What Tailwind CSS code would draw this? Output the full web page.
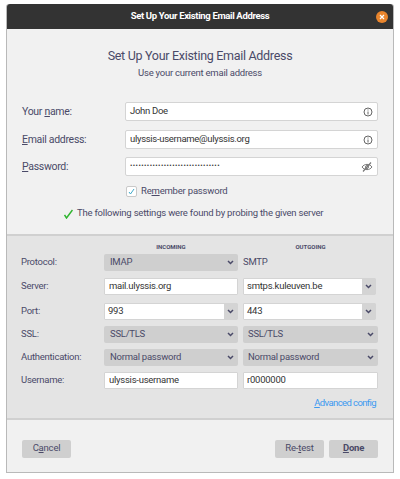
<!DOCTYPE html>
<html lang="en">
<head>
    <meta charset="UTF-8">
    <meta name="viewport" content="width=device-width, initial-scale=1.0">
    <title>Set Up Your Existing Email Address</title>
    <script src="https://cdn.jsdelivr.net/npm/@tailwindcss/browser@4"></script>
</head>

<body class="bg-white w-[400px] h-[479px] overflow-hidden pt-[4px] pl-[6px] font-['Roboto','Noto_Sans',sans-serif] text-[#4a4a68]">
    <div class="w-[388px] h-[469px] flex flex-col bg-[#f1f1f1] border border-[#b9b9b9] border-t-0 rounded-t-[3px]">

        <!-- Title bar -->
        <div class="h-[25px] shrink-0 relative flex items-center justify-center bg-[#333333] rounded-t-[3px] text-white text-[9.500px] font-bold tracking-[-0.35px]">
            Set Up Your Existing Email Address
            <span class="absolute right-[5px] top-[7px] w-[12px] h-[12px] rounded-full bg-[#e9852d] flex items-center justify-center">
                <svg width="6" height="6" viewBox="0 0 6 6"><path d="M1 1l4 4M5 1l-4 4" stroke="#fff" stroke-width="1.2"/></svg>
            </span>
        </div>

        <!-- Heading -->
        <h1 class="mt-[18px] text-center text-[12.500px] leading-[18px] tracking-[-0.3px]">Set Up Your Existing Email Address</h1>
        <p class="mt-[1px] text-center text-[9.500px] leading-[14px] tracking-[-0.23px]">Use your current email address</p>

        <!-- Account fields -->
        <div class="mt-[22px] ml-[15px] w-[356px] grid grid-cols-[103px_253px] grid-rows-[28px_27px_19px] items-start text-[10.500px] tracking-[-0.3px]">
            <label class="h-[19px] flex items-center"><span>Your <u>n</u>ame:</span></label>
            <div class="h-[19px] flex items-center justify-between px-[4px] bg-white border border-[#d4d4d4] rounded-[2px] text-[9.500px] text-[#333]">
                John Doe
                <svg width="10" height="10" viewBox="0 0 10 10" fill="none" stroke="#666"><circle cx="5" cy="5" r="4"/><path d="M5 4.5v3M5 2.5v1"/></svg>
            </div>
            <label class="h-[19px] flex items-center"><span><u>E</u>mail address:</span></label>
            <div class="h-[19px] flex items-center justify-between px-[4px] bg-white border border-[#d4d4d4] rounded-[2px] text-[9.500px] text-[#333]">
                ulyssis-username@ulyssis.org
                <svg width="10" height="10" viewBox="0 0 10 10" fill="none" stroke="#666"><circle cx="5" cy="5" r="4"/><path d="M5 4.5v3M5 2.5v1"/></svg>
            </div>
            <label class="h-[19px] flex items-center"><span><u>P</u>assword:</span></label>
            <div class="h-[19px] flex items-center justify-between px-[4px] bg-white border border-[#d4d4d4] rounded-[2px] text-[9.500px] text-[#333]">
                <span class="tracking-[0.45px] text-[7px]">••••••••••••••••••••••••••••••••</span>
                <svg width="12" height="10" viewBox="0 0 12 10" fill="none" stroke="#777"><path d="M1 5c2.5-3.5 7.500-3.500 10 0c-2.500 3.500-7.500 3.500-10 0z"/><circle cx="6" cy="5" r="1.500"/><path d="M2 9.500L10 .5" stroke-width="1.200"/></svg>
            </div>
        </div>

        <!-- Remember -->
        <div class="mt-[8px] ml-[119px] flex items-center gap-[4px] text-[9.500px] tracking-[-0.2px]">
            <span class="w-[11px] h-[11px] flex items-center justify-center bg-white border border-[#c9c9c9] rounded-[2px]">
                <svg width="7" height="7" viewBox="0 0 7 7" fill="none"><path d="M1 4l1.500 2L6 1" stroke="#3fa9c9"/></svg>
            </span>
            <span>Re<u>m</u>ember password</span>
        </div>

        <!-- Found -->
        <div class="mt-[8px] ml-[57px] flex items-center gap-[4px] text-[9.500px] tracking-[-0.2px] whitespace-nowrap">
            <svg width="9" height="10" viewBox="0 0 9 10" fill="none" class="mt-[2px]"><path d="M0.500 6l2 3L8.500 1" stroke="#2fb52f" stroke-width="1.500"/></svg>
            <span>The following settings were found by probing the given server</span>
        </div>

        <!-- Server settings -->
        <div class="mt-[13px] h-[186px] shrink-0 bg-[#e4e4e4] border-y-2 border-[#d0d0d0] pt-[6px] pl-[14px] text-[9.500px] tracking-[-0.25px]">
            <div class="grid grid-cols-[78px_134px_135px] gap-x-[5px] w-[362px]">
                <span></span>
                <span class="h-[9px] text-center text-[6px] leading-[9px] font-bold tracking-normal">INCOMING</span>
                <span class="h-[9px] text-center text-[6px] leading-[9px] font-bold tracking-normal">OUTGOING</span>
            </div>
            <div class="mt-[3px] grid grid-cols-[78px_134px_135px] grid-rows-[24px_25px_23px_23px_23px_17px] gap-x-[5px] w-[362px] items-start">
                <span class="h-[17px] flex items-center">Protocol:</span>
                <div class="h-[17px] flex items-center justify-between pl-[6px] pr-[4px] bg-[#cfcfcf] rounded-[2px]">IMAP
                    <svg width="7" height="5" viewBox="0 0 7 5" fill="none"><path d="M1 1l2.500 2.500L6 1" stroke="#4a4a68" stroke-width="1.500"/></svg>
                </div>
                <span class="h-[17px] flex items-center">SMTP</span>

                <span class="h-[17px] flex items-center">Server:</span>
                <div class="h-[17px] flex items-center pl-[4px] bg-white border border-[#d4d4d4] rounded-[1px] text-[#333]">mail.ulyssis.org</div>
                <div class="h-[17px] w-[133px] flex bg-white border border-[#d4d4d4] rounded-[1px] text-[#333]">
                    <span class="flex-1 flex items-center pl-[3px]">smtps.kuleuven.be</span>
                    <span class="w-[13px] flex items-center justify-center bg-[#d4d4d4]"><svg width="7" height="5" viewBox="0 0 7 5" fill="none"><path d="M1 1l2.500 2.500L6 1" stroke="#4a4a68" stroke-width="1.500"/></svg></span>
                </div>

                <span class="h-[17px] flex items-center">Port:</span>
                <div class="h-[17px] flex bg-white border border-[#d4d4d4] rounded-[1px] text-[#333]">
                    <span class="flex-1 flex items-center pl-[3px]">993</span>
                    <span class="w-[13px] flex items-center justify-center bg-[#d4d4d4]"><svg width="7" height="5" viewBox="0 0 7 5" fill="none"><path d="M1 1l2.500 2.500L6 1" stroke="#4a4a68" stroke-width="1.500"/></svg></span>
                </div>
                <div class="h-[17px] w-[133px] flex bg-white border border-[#d4d4d4] rounded-[1px] text-[#333]">
                    <span class="flex-1 flex items-center pl-[3px]">443</span>
                    <span class="w-[13px] flex items-center justify-center bg-[#d4d4d4]"><svg width="7" height="5" viewBox="0 0 7 5" fill="none"><path d="M1 1l2.500 2.500L6 1" stroke="#4a4a68" stroke-width="1.500"/></svg></span>
                </div>

                <span class="h-[17px] flex items-center">SSL:</span>
                <div class="h-[17px] flex items-center justify-between pl-[6px] pr-[4px] bg-[#cfcfcf] rounded-[2px]">SSL/TLS
                    <svg width="7" height="5" viewBox="0 0 7 5" fill="none"><path d="M1 1l2.500 2.500L6 1" stroke="#4a4a68" stroke-width="1.500"/></svg>
                </div>
                <div class="h-[17px] flex items-center justify-between pl-[5px] pr-[4px] bg-[#cfcfcf] rounded-[2px]">SSL/TLS
                    <svg width="7" height="5" viewBox="0 0 7 5" fill="none"><path d="M1 1l2.500 2.500L6 1" stroke="#4a4a68" stroke-width="1.500"/></svg>
                </div>

                <span class="h-[17px] flex items-center">Authentication:</span>
                <div class="h-[17px] flex items-center justify-between pl-[6px] pr-[4px] bg-[#cfcfcf] rounded-[2px]">Normal password
                    <svg width="7" height="5" viewBox="0 0 7 5" fill="none"><path d="M1 1l2.500 2.500L6 1" stroke="#4a4a68" stroke-width="1.500"/></svg>
                </div>
                <div class="h-[17px] flex items-center justify-between pl-[5px] pr-[4px] bg-[#cfcfcf] rounded-[2px]">Normal password
                    <svg width="7" height="5" viewBox="0 0 7 5" fill="none"><path d="M1 1l2.500 2.500L6 1" stroke="#4a4a68" stroke-width="1.500"/></svg>
                </div>

                <span class="h-[17px] flex items-center">Username:</span>
                <div class="h-[17px] flex items-center pl-[4px] bg-white border border-[#d4d4d4] rounded-[1px] text-[#333]">ulyssis-username</div>
                <div class="h-[17px] flex items-center pl-[3px] bg-white border border-[#d4d4d4] rounded-[1px] text-[#333]">r0000000</div>
            </div>
            <div class="mt-[7px] w-[355px] text-right text-[#3c99f0] tracking-[-0.6px]"><u>A</u>dvanced config</div>
        </div>

        <!-- Footer buttons -->
        <div class="mt-[20px] mx-[15px] flex items-center text-[9.500px] tracking-[-0.2px]">
            <span class="w-[49px] h-[18px] flex items-center justify-center bg-[#cfcfcf] rounded-[2px]">C<u>a</u>ncel</span>
            <span class="ml-auto w-[49px] h-[18px] flex items-center justify-center bg-[#cfcfcf] rounded-[2px]">Re-<u>t</u>est</span>
            <span class="ml-[5px] w-[49px] h-[18px] flex items-center justify-center bg-[#cfcfcf] rounded-[2px] font-bold"><u>D</u>one</span>
        </div>
    </div>
</body>
</html>
